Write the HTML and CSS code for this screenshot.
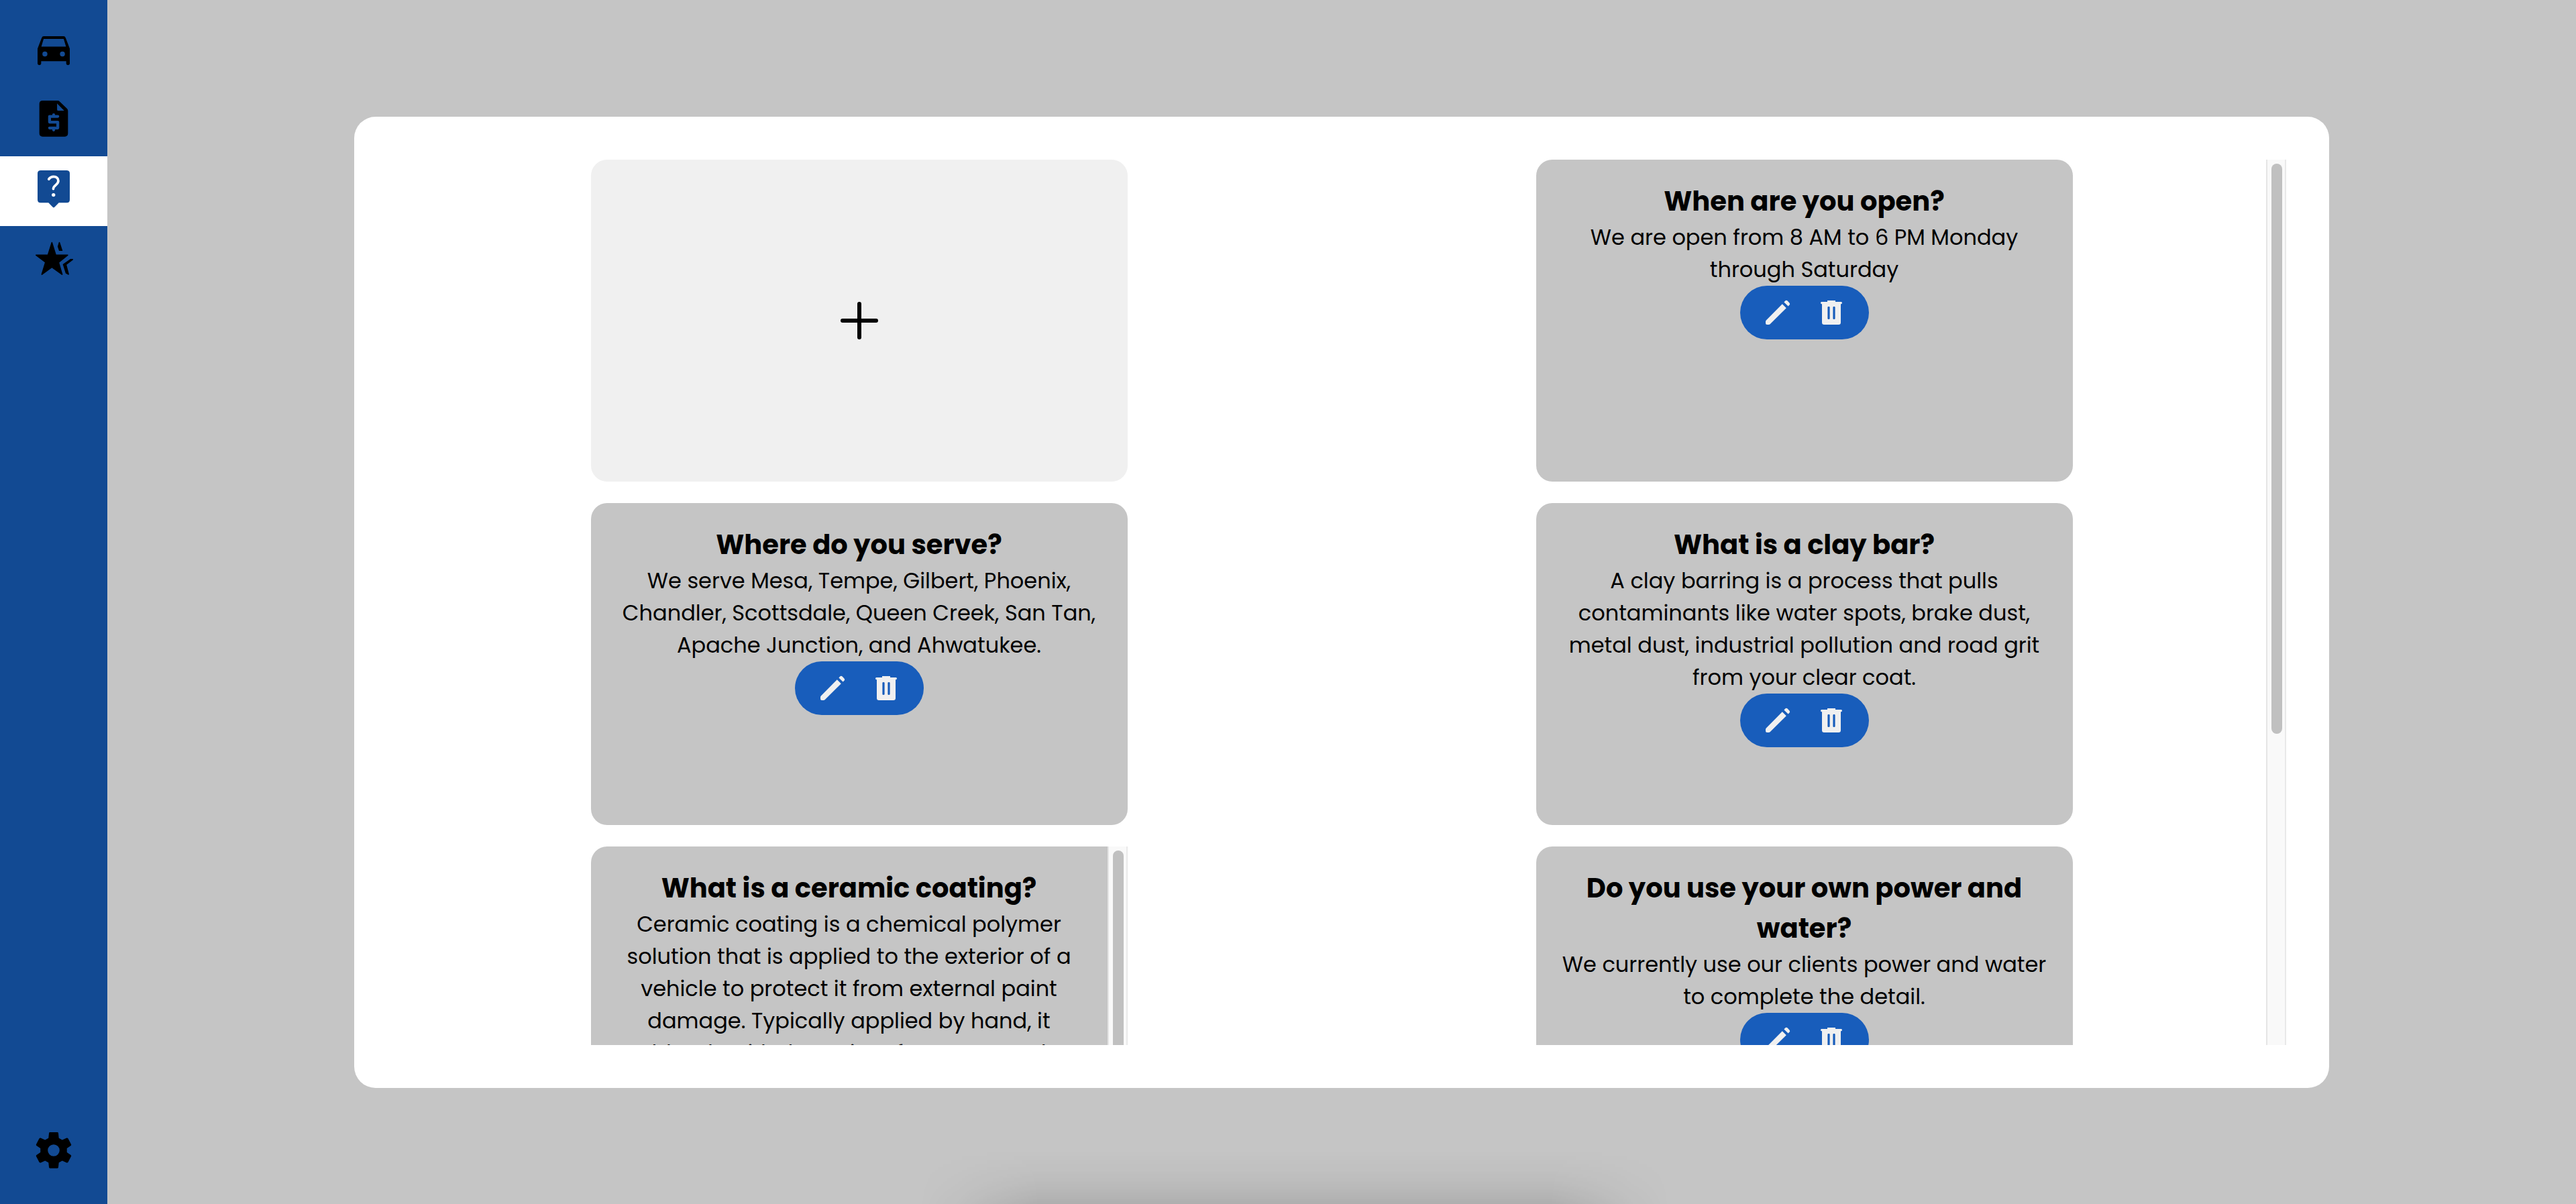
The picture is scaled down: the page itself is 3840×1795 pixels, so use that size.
FILE: index.html
```html
<!DOCTYPE html>
<html lang="en">
<head>
<meta charset="utf-8">
<meta name="viewport" content="width=device-width, initial-scale=1">
<title>FAQ</title>
<link rel="stylesheet" href="styles.css">
</head>
<body>
<svg class="defs" aria-hidden="true">
  <symbol id="car" viewBox="0 0 24 24">
    <path fill-rule="evenodd" d="M3 11.8 5.3 5.8Q5.6 4.9 6.5 4.9H17.5Q18.4 4.9 18.7 5.8L21 11.8V20A1 1 0 0 1 19 20V18.8H5V20A1 1 0 0 1 3 20ZM5.1 10.7H18.9L17.6 6.4H6.4ZM7.1 13.4A1.4 1.4 0 1 0 7.1 16.2 1.4 1.4 0 1 0 7.1 13.4ZM16.9 13.4A1.4 1.4 0 1 0 16.9 16.2 1.4 1.4 0 1 0 16.9 13.4Z"/>
  </symbol>
  <symbol id="quote" viewBox="0 0 24 24">
    <path fill-rule="evenodd" d="M5.8 1.9H14.2Q14.9 1.9 15.4 2.4L19.5 6.4Q20 6.9 20 7.6V20.2Q20 22 18.2 22H5.8Q4 22 4 20.2V3.7Q4 1.9 5.8 1.9ZM13.9 3.5V6.8Q13.9 7.5 14.6 7.5H17.9Z"/>
    <path class="cut" d="M14.3 10.7H9.7V13.9H14.3V17.2H9.7M12 9.8V10.7M12 17.2V18.3"/>
  </symbol>
  <symbol id="help" viewBox="0 0 24 24">
    <path d="M4.7 1.9H19.3Q21 1.9 21 3.6V18.3Q21 20 19.3 20H14.9L12.5 22.4Q12 22.9 11.5 22.4L9.1 20H4.7Q3 20 3 18.3V3.6Q3 1.9 4.7 1.9Z"/>
    <path class="mark" d="M9.3 6.8C9.9 5.9 10.8 5.4 12 5.4 13.6 5.4 14.6 6.4 14.6 7.8 14.6 9.9 11.8 10.2 11.8 12.2"/>
    <circle class="mark-dot" cx="11.9" cy="15.6" r="1"/>
  </symbol>
  <symbol id="stars" viewBox="0 0 24 24">
    <path d="M10.7 3.2Q11 2.7 11.3 3.2L13.4 9.9H19.9Q20.4 10.2 20 10.5L15.1 14.4 17 20.9Q17 21.5 16.5 21.3L11 17.3 5.6 21.3Q5.1 21.5 5.1 20.9L7.1 14.3 2 10.5Q1.6 10.2 2.1 9.9H8.6Z"/>
    <path d="M14.9 3.1Q15.2 2.7 15.5 3.2L17 7.9H15L14.2 5.4ZM21.4 12.4 22.7 12.4Q23.1 12.7 22.8 12.9L19.2 15.7 20.6 20.9Q20.6 21.4 20 21.2L18.7 20.4 17.1 15.4Z"/>
  </symbol>
  <symbol id="gear" viewBox="0 0 24 24">
    <path fill-rule="evenodd" d="M9.9 1.9H14.1Q14.5 1.9 14.6 2.3L14.9 5.2 16.8 6.2 19.3 5.1Q19.8 5 20.1 5.4L21.8 8.7Q21.9 9.1 21.6 9.4L19.4 10.9V13.1L21.6 14.6Q21.9 14.9 21.8 15.3L20.1 18.6Q19.8 19 19.3 18.9L16.8 17.8 14.9 18.8 14.6 21.6Q14.5 22 14.1 22H9.9Q9.5 22 9.4 21.6L9.1 18.8 7.2 17.8 4.7 18.9Q4.2 19 3.9 18.6L2.2 15.3Q2.1 14.9 2.4 14.6L4.6 13.1V10.9L2.4 9.4Q2.1 9.1 2.2 8.7L3.9 5.4Q4.2 5 4.7 5.1L7.2 6.2 9.1 5.2 9.4 2.3Q9.5 1.9 9.9 1.9ZM12 8.7A3.3 3.3 0 1 0 12 15.3 3.3 3.3 0 1 0 12 8.7Z"/>
  </symbol>
  <symbol id="plus" viewBox="0 0 24 24">
    <path class="line" d="M12 5.75V18.25M5.75 12H18.25"/>
  </symbol>
  <symbol id="pencil" viewBox="0 0 24 24">
    <path d="M15.4 5.6 18.4 8.6 6.3 20.6Q5.9 21 5.3 21H4Q3 21 3 20V18.7Q3 18.1 3.4 17.7ZM16.7 4.2 17.6 3.3Q18.4 2.5 19.3 3.3L20.7 4.7Q21.5 5.6 20.7 6.4L19.8 7.3Z"/>
  </symbol>
  <symbol id="trash" viewBox="0 0 24 24">
    <path fill-rule="evenodd" d="M9 3H15V4H19.3Q20 4 20 4.8T19.3 5.6H19V19.4Q19 21 17.4 21H6.6Q5 21 5 19.4V5.6H4.7Q4 5.6 4 4.8T4.7 4H9ZM9.2 8Q9.2 7.5 10 7.5T10.8 8V16.5Q10.8 17 10 17T9.2 16.5ZM13.2 8Q13.2 7.5 14 7.5T14.8 8V16.5Q14.8 17 14 17T13.2 16.5Z"/>
  </symbol>
</svg>
<nav class="sidebar" aria-label="Main">
  <a class="nav-item" href="#vehicles" aria-label="Vehicles"><svg><use href="#car"/></svg></a>
  <a class="nav-item" href="#quotes" aria-label="Quotes"><svg><use href="#quote"/></svg></a>
  <a class="nav-item active" href="#faq" aria-label="FAQ" aria-current="page"><svg><use href="#help"/></svg></a>
  <a class="nav-item" href="#reviews" aria-label="Reviews"><svg><use href="#stars"/></svg></a>
  <a class="nav-item settings" href="#settings" aria-label="Settings"><svg><use href="#gear"/></svg></a>
</nav>
<main class="content">
  <section class="panel">
    <div class="scroller">
      <button class="card add" type="button" aria-label="Add question"><svg><use href="#plus"/></svg></button>
      <article class="card">
        <div class="card-body">
          <h2>When are you open?</h2>
          <p>We are open from 8 AM to 6 PM Monday through Saturday</p>
          <div class="actions">
            <button type="button" aria-label="Edit"><svg><use href="#pencil"/></svg></button>
            <button type="button" aria-label="Delete"><svg><use href="#trash"/></svg></button>
          </div>
        </div>
      </article>
      <article class="card">
        <div class="card-body">
          <h2>Where do you serve?</h2>
          <p>We serve Mesa, Tempe, Gilbert, Phoenix, Chandler, Scottsdale, Queen Creek, San Tan, Apache Junction, and Ahwatukee.</p>
          <div class="actions">
            <button type="button" aria-label="Edit"><svg><use href="#pencil"/></svg></button>
            <button type="button" aria-label="Delete"><svg><use href="#trash"/></svg></button>
          </div>
        </div>
      </article>
      <article class="card">
        <div class="card-body">
          <h2>What is a clay bar?</h2>
          <p>A clay barring is a process that pulls contaminants like water spots, brake dust, metal dust, industrial pollution and road grit from your clear coat.</p>
          <div class="actions">
            <button type="button" aria-label="Edit"><svg><use href="#pencil"/></svg></button>
            <button type="button" aria-label="Delete"><svg><use href="#trash"/></svg></button>
          </div>
        </div>
      </article>
      <article class="card overflowing">
        <div class="card-body">
          <h2>What is a ceramic coating?</h2>
          <p>Ceramic coating is a chemical polymer solution that is applied to the exterior of a vehicle to protect it from external paint damage. Typically applied by hand, it blends with the paint of your car and</p>
        </div>
        <div class="track"><div class="thumb"></div></div>
      </article>
      <article class="card">
        <div class="card-body">
          <h2>Do you use your own power and water?</h2>
          <p>We currently use our clients power and water to complete the detail.</p>
          <div class="actions">
            <button type="button" aria-label="Edit"><svg><use href="#pencil"/></svg></button>
            <button type="button" aria-label="Delete"><svg><use href="#trash"/></svg></button>
          </div>
        </div>
      </article>
    </div>
    <div class="track"><div class="thumb"></div></div>
  </section>
</main>
<div class="dock-shadow"></div>
</body>
</html>
```
FILE: styles.css
```css
* { box-sizing: border-box; }

body {
  margin: 0;
  height: 100vh;
  display: flex;
  position: relative;
  overflow: hidden;
  background: #c5c5c5;
  color: #000;
  font-family: Poppins, Inter, sans-serif;
}

.defs { position: absolute; width: 0; height: 0; }

svg { display: block; fill: currentColor; }

button {
  border: 0;
  padding: 0;
  background: none;
  color: inherit;
  font: inherit;
  cursor: pointer;
}

.sidebar {
  width: 160px;
  flex: none;
  display: flex;
  flex-direction: column;
  padding: 25px 0 24px;
  background: #124a93;
}

.nav-item {
  display: flex;
  justify-content: center;
  padding: 16px 0 24px;
  color: #000;
}

.nav-item svg { width: 64px; height: 64px; }
.nav-item.active { background: #fff; color: #124a93; }
.nav-item.settings { margin-top: auto; }

.cut { fill: none; stroke: #124a93; stroke-width: 1.6; stroke-linecap: round; stroke-linejoin: round; }
.mark { fill: none; stroke: #fff; stroke-width: 1.4; stroke-linecap: round; }
.mark-dot { fill: #fff; }
.line { fill: none; stroke: currentColor; stroke-width: 1.5; stroke-linecap: round; }

.content {
  flex: 1;
  min-width: 0;
  display: flex;
  align-items: center;
  justify-content: center;
}

.panel {
  width: 80%;
  display: flex;
  padding: 64px;
  border-radius: 32px;
  background: #fff;
}

.scroller {
  flex: 1;
  height: calc(100vh - 475px);
  display: grid;
  grid-template-columns: repeat(2, 1fr);
  align-content: start;
  justify-items: center;
  gap: 32px;
  overflow: hidden;
}

.card {
  width: 800px;
  max-width: 100%;
  height: 480px;
  display: flex;
  overflow: hidden;
  border-radius: 24px;
  background: #c5c5c5;
  text-align: center;
}

.card.add {
  align-items: center;
  justify-content: center;
  background: #f0f0f0;
}

.card.add svg { width: 96px; height: 96px; }
.card.overflowing { border-radius: 24px 0 0 24px; }

.card-body {
  flex: 1;
  padding: 32px;
}

h2 {
  margin: 0;
  font-size: 40px;
  line-height: 60px;
  font-weight: 700;
}

p {
  margin: 0;
  font-size: 32px;
  line-height: 48px;
}

.actions {
  display: inline-flex;
  padding: 0 16px;
  border-radius: 40px;
  background: #185dbb;
  color: #f0f0f0;
}

.actions button { padding: 16px; }
.actions svg { width: 48px; height: 48px; }

.track {
  width: 30px;
  flex: none;
  padding: 6px;
  border-left: 2px solid #e5e5e5;
  border-right: 2px solid #e9e9e9;
  background: #f9f9f9;
}

.thumb {
  width: 16px;
  height: 65%;
  border-radius: 8px;
  background: #c0c0c0;
}

.overflowing .thumb { height: 80%; }

.dock-shadow {
  position: absolute;
  bottom: 0;
  left: 50%;
  width: 1120px;
  height: 80px;
  margin-left: -550px;
  background: linear-gradient(to top, rgba(0, 0, 0, 0.11), rgba(0, 0, 0, 0.05) 35%, rgba(0, 0, 0, 0.02) 65%, transparent);
  mask-image: linear-gradient(to right, transparent, rgba(0, 0, 0, 0.2) 5%, #000 16%, #000 84%, rgba(0, 0, 0, 0.2) 95%, transparent);
  pointer-events: none;
}
```
